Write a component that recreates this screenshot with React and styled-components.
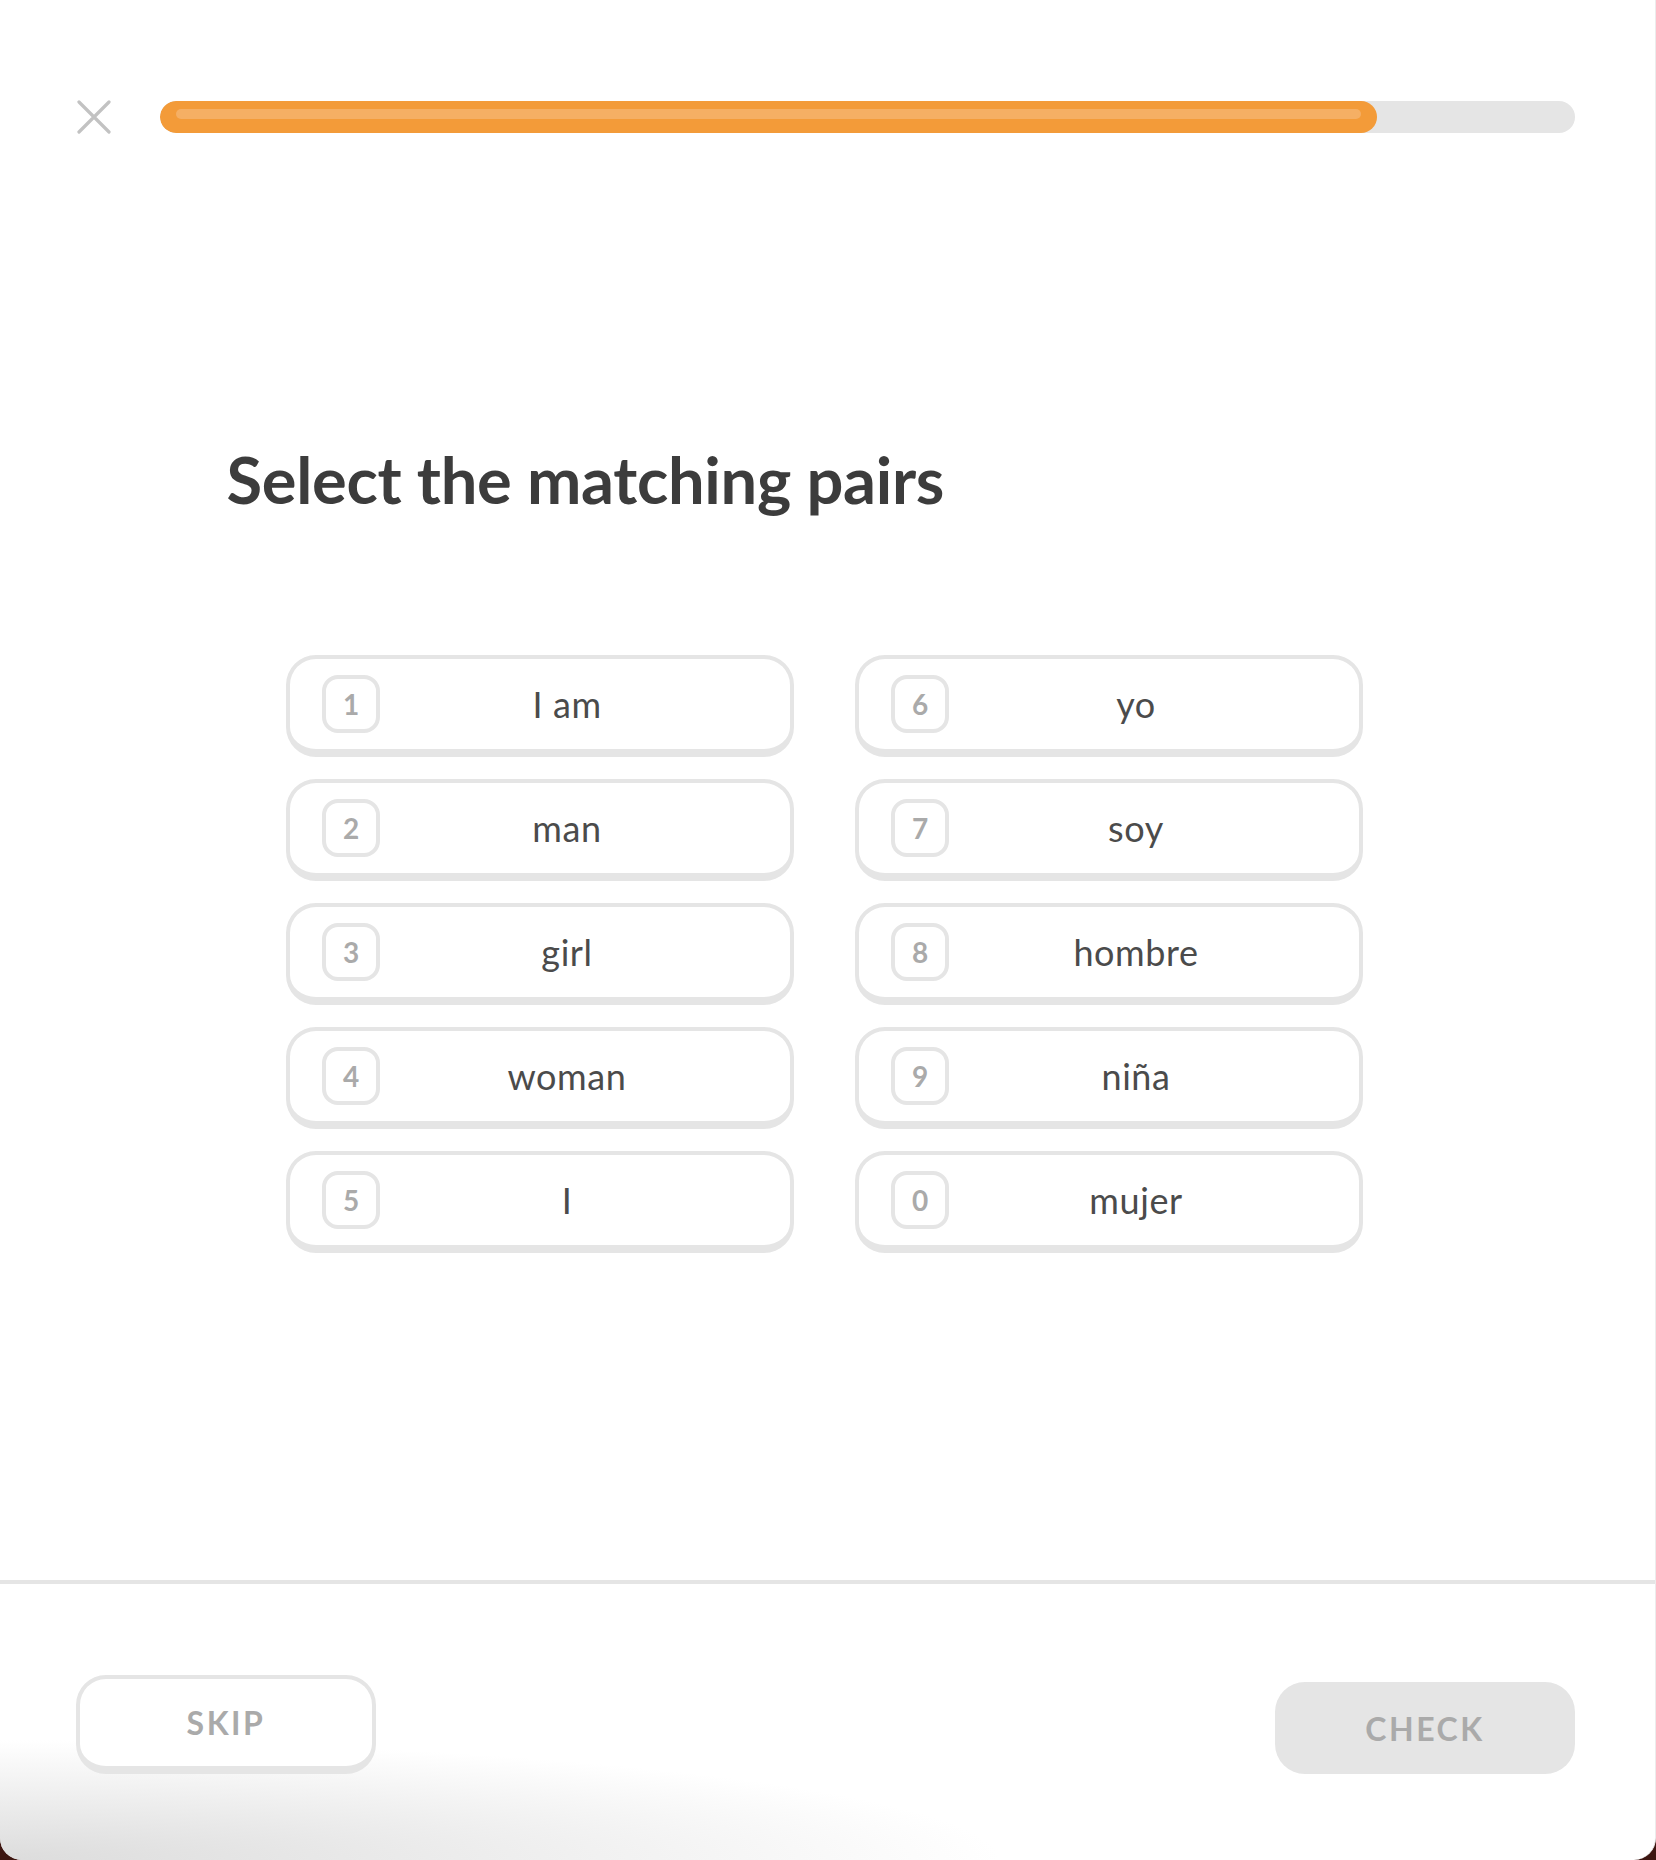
import React from "react";
import styled, { createGlobalStyle } from "styled-components";

const GlobalStyle = createGlobalStyle`
  html, body {
    margin: 0;
    padding: 0;
    background: #3d1611;
  }
  * {
    box-sizing: border-box;
  }
`;

const Screen = styled.div`
  display: flex;
  flex-direction: column;
  min-height: 1860px;
  background: #fff;
  border-right: 1px solid #ececec;
  border-radius: 0 0 22px 22px;
  overflow: hidden;
  font-family: Lato, "Open Sans", sans-serif;
`;

const Header = styled.header`
  display: flex;
  align-items: center;
  gap: 49px;
  padding: 100px 80px 0 77px;
`;

const CloseButton = styled.button`
  display: flex;
  padding: 0;
  border: none;
  background: none;
  cursor: pointer;
`;

const Track = styled.div`
  flex: 1;
  height: 32px;
  border-radius: 16px;
  background: #e5e5e5;
  overflow: hidden;
`;

const Fill = styled.div`
  height: 100%;
  border-radius: 16px;
  background: #f39b39;
  padding: 8px 16px 0;
`;

const Shine = styled.div`
  height: 10px;
  border-radius: 5px;
  background: #f5af64;
`;

const Main = styled.main`
  flex: 1;
  width: 1202px;
  margin: 0 auto;
  padding-top: 306px;
`;

const Title = styled.h1`
  margin: 0 0 137px;
  font-size: 65px;
  line-height: 78px;
  font-weight: 700;
  letter-spacing: -0.3px;
  color: #3c3c3c;
`;

const Pairs = styled.div`
  display: grid;
  grid-template-columns: repeat(2, 508px);
  grid-template-rows: repeat(5, 102px);
  grid-auto-flow: column;
  column-gap: 61px;
  row-gap: 22px;
  justify-content: center;
  margin-left: -6px;
`;

const Tile = styled.button`
  display: flex;
  align-items: center;
  height: 102px;
  padding: 0 36px 0 32px;
  border: 4px solid #e5e5e5;
  border-bottom-width: 8px;
  border-radius: 30px;
  background: #fff;
  font-family: inherit;
  cursor: pointer;
`;

const Key = styled.span`
  display: flex;
  align-items: center;
  justify-content: center;
  width: 58px;
  height: 58px;
  border: 4px solid #e5e5e5;
  border-radius: 16px;
  font-size: 28px;
  font-weight: 700;
  color: #aaaaaa;
`;

const Word = styled.span`
  flex: 1;
  text-align: center;
  font-size: 36px;
  letter-spacing: 0.6px;
  color: #4b4b4b;
`;

const Footer = styled.footer`
  display: flex;
  justify-content: space-between;
  align-items: flex-end;
  height: 280px;
  padding: 0 80px 86px 76px;
  border-top: 4px solid #e5e5e5;
  background: radial-gradient(
    ellipse 1000px 120px at 0 100%,
    #dcdcdc 0%,
    rgba(255, 255, 255, 0) 100%
  );
`;

const FooterButton = styled.button`
  width: 300px;
  height: ${(p) => (p.$flat ? "92px" : "99px")};
  border: ${(p) => (p.$flat ? "none" : "4px solid #e5e5e5")};
  border-bottom-width: ${(p) => (p.$flat ? "0" : "8px")};
  border-radius: 30px;
  background: ${(p) => (p.$flat ? "#e5e5e5" : "#fff")};
  font-family: inherit;
  font-size: 32px;
  font-weight: 700;
  letter-spacing: 2.5px;
  color: #aaaaaa;
  cursor: pointer;
`;

const left = ["I am", "man", "girl", "woman", "I"];
const right = ["yo", "soy", "hombre", "niña", "mujer"];
const tiles = [
  ...left.map((w, i) => ({ key: String(i + 1), word: w })),
  ...right.map((w, i) => ({ key: String((i + 6) % 10), word: w })),
];

function CloseIcon() {
  return (
    <svg width="34" height="34" viewBox="0 0 34 34">
      <path
        d="M2 2 L32 32 M32 2 L2 32"
        stroke="#c2c2c2"
        strokeWidth="3.2"
        strokeLinecap="round"
      />
    </svg>
  );
}

export default function App() {
  const progress = 86;
  return (
    <>
      <GlobalStyle />
      <Screen>
        <Header>
          <CloseButton aria-label="Close">
            <CloseIcon />
          </CloseButton>
          <Track>
            <Fill style={{ width: `${progress}%` }}>
              <Shine />
            </Fill>
          </Track>
        </Header>
        <Main>
          <Title>Select the matching pairs</Title>
          <Pairs>
            {tiles.map((t) => (
              <Tile key={t.key}>
                <Key>{t.key}</Key>
                <Word>{t.word}</Word>
              </Tile>
            ))}
          </Pairs>
        </Main>
        <Footer>
          <FooterButton>SKIP</FooterButton>
          <FooterButton $flat>CHECK</FooterButton>
        </Footer>
      </Screen>
    </>
  );
}
